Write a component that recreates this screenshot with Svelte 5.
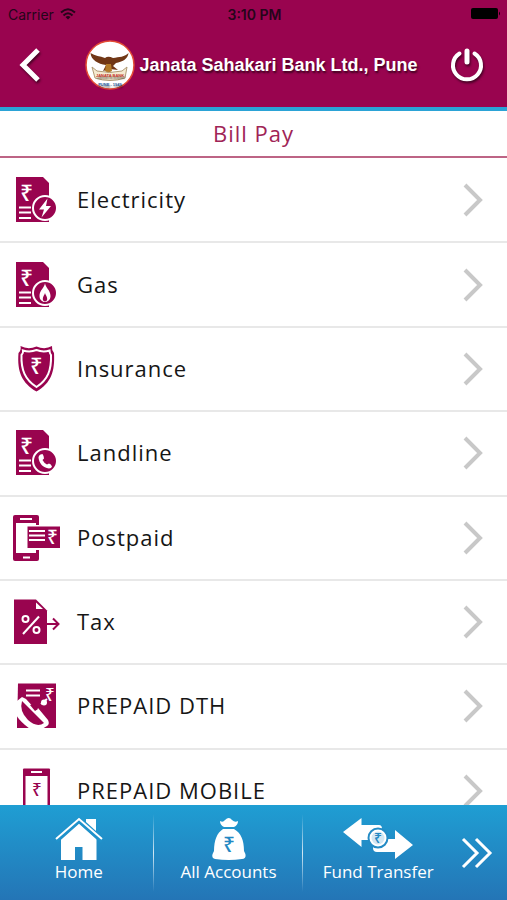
<script>
  const bills = [
    { icon: 'electricity', label: 'Electricity' },
    { icon: 'gas', label: 'Gas' },
    { icon: 'insurance', label: 'Insurance' },
    { icon: 'landline', label: 'Landline' },
    { icon: 'postpaid', label: 'Postpaid' },
    { icon: 'tax', label: 'Tax' },
    { icon: 'dth', label: 'PREPAID DTH' },
    { icon: 'mobile', label: 'PREPAID MOBILE' }
  ];
</script>

{#snippet invoice()}
  <path class="fill" d="M4 1H31L37 7V46H4Z" />
  <text class="rupee light" x="8" y="25" font-size="23">₹</text>
  <path class="line" d="M7 31.5H19M7 36.5H19M7 42H19" />
  <circle class="badge" cx="33" cy="32" r="12" />
{/snippet}

{#snippet billIcon(name)}
  <svg class="bill-icon" viewBox="0 0 48 48" aria-hidden="true">
    {#if name === 'electricity'}
      {@render invoice()}
      <path fill="#fff" d="M35.5 22.5L27 33.5H32L29.5 41.5L39 30H34Z" />
    {:else if name === 'gas'}
      {@render invoice()}
      <path fill="#fff" d="M33 22C33.5 27 38.5 29 38.5 35C38.5 38.5 36 41 33 41C30 41 27.5 38.5 27.5 35C27.5 29 32.5 27 33 22Z" />
      <path class="fill" d="M33 32C33.5 34 35.2 35.5 35.2 38C35.2 39.5 34.2 40.5 33 40.5C31.8 40.5 30.8 39.5 30.8 38C30.8 35.5 32.5 34 33 32Z" />
    {:else if name === 'insurance'}
      <path class="fill" d="M8.5 1Q16 5 24.5 1.5Q33 5 40 1Q39.500 5 42 8C43 27 39 38 24.500 46.500C10 38 5 27 6.500 8Q9.500 5 8.500 1Z" />
      <path fill="none" stroke="#fff" stroke-width="2" d="M11 5.500Q18 7.500 24.500 5Q31 7.500 37.500 5.500Q37.500 8 39 10C39.500 25 36 34.500 24.500 42C13 34.500 9 25 9.500 10Q11.500 8 11 5.500Z" />
      <text class="rupee light" x="18" y="29" font-size="22">₹</text>
    {:else if name === 'landline'}
      {@render invoice()}
      <path fill="#fff" d="M28.500 25.500L30.500 25Q32 27 32 29.500L30.500 31Q32 34 35 35.500L37 34.500Q39 35 40 37.500Q39.500 39.500 37 39.500C31 39 27 34 26.500 28.500Q26.500 26.500 28.500 25.500Z" />
    {:else if name === 'postpaid'}
      <rect class="fill" x="1" y="1" width="26" height="46" rx="2" />
      <path fill="#fff" d="M4 9H24V11H28V36H24V39H4Z" />
      <path class="line" d="M8 5H20M11 43.500H18" />
      <path class="fill" d="M15.500 12.500H48V34H15.500Z" />
      <path class="line" d="M17 17H33M17 21.500H33M17 26H33" />
      <text class="rupee light" x="35" y="30" font-size="19">₹</text>
    {:else if name === 'tax'}
      <path class="fill" d="M2 1.500H24L35 12.500V46H2Z" />
      <path fill="#fff" d="M24 4.500V11H31Z" />
      <g fill="none" stroke="#fff" stroke-width="2">
        <circle cx="13.500" cy="21" r="3" />
        <circle cx="24.500" cy="32" r="3" />
        <path d="M11 36L27 18.500" />
      </g>
      <path fill="none" stroke="#99044f" stroke-width="2" d="M35 26H46M41 20.500L46.500 26L41 31.500" />
    {:else if name === 'dth'}
      <path class="fill" d="M6 1.500H44V46H5Z" />
      <path class="line" d="M14 8.500H28M14 13.500H28" />
      <text class="rupee light" x="33" y="19" font-size="17">₹</text>
      <path fill="#fff" d="M5 19L10 15L14 17L24 28L26 26L36 38Q38 42 35 44L30 47H18L13 43Q5 36 4 32Z" />
      <path class="fill" d="M10 19L32 41Q25 46 16 38Q7 29 10 19Z" />
      <path class="fill" d="M5 35Q9 42 15 46H5ZM22 22L26 27L23 29L18 23Z" />
      <path fill="none" stroke="#fff" stroke-width="2" d="M29 22L35 17" />
      <circle cx="32" cy="20.500" r="3" fill="#fff" />
    {:else if name === 'mobile'}
      <rect class="fill" x="11" y="1.500" width="27" height="46" rx="1" />
      <path fill="#fff" d="M13.500 9H35.500V41H13.500Z" />
      <path class="line" d="M19 5H30" />
      <text class="rupee" fill="#99044f" x="20" y="29" font-size="17">₹</text>
    {/if}
  </svg>
{/snippet}

<div class="app">
  <header>
    <div class="status">
      <span class="carrier">
        Carrier
        <svg width="16" height="12" viewBox="0 0 16 12" aria-hidden="true">
          <g fill="none" stroke="#25051a" stroke-width="2">
            <path d="M1 4.500Q8 -2 15 4.500" />
            <path d="M3.500 7.500Q8 3 12.500 7.500" />
          </g>
          <path fill="#25051a" d="M5.500 9Q8 7 10.500 9L8 11.500Z" />
        </svg>
      </span>
      <span class="time">3:10 PM</span>
      <span class="battery">
        <svg width="30" height="12" viewBox="0 0 30 12" aria-hidden="true">
          <rect x="0" y="0" width="27" height="11" rx="2" />
          <path d="M28 3.500Q30 5.500 28 7.500Z" />
        </svg>
      </span>
    </div>
    <div class="brand-bar">
      <button class="back" aria-label="Back">
        <svg width="24" height="36" viewBox="0 0 24 36" aria-hidden="true">
          <path fill="none" stroke="#fff" stroke-width="5" d="M20 3L5 18L20 33" />
        </svg>
      </button>
      <div class="brand">
        <svg width="50" height="50" viewBox="0 0 50 50" aria-hidden="true">
          <circle cx="25" cy="25" r="24" fill="#fff" stroke="#e34b35" stroke-width="1.500" />
          <path fill="#713716" d="M5.500 13C10 16 15 16 20 18Q23 15.500 28 18C34 17 40 17 43.500 13C43 19 37 22 31 23L28 26L33 30L25 29L18 31L21 25C13 24 6 20 5.500 13Z" />
          <path fill="#b47b29" d="M21 24H26L27 31L23 33L20 31Z" />
          <path fill="#f5ead0" stroke="#b09a75" stroke-width="1" d="M7 27L12 31Q25 34 37 31L42 27L40 38Q25 43 10 38Z" />
          <text x="25" y="37" text-anchor="middle" font-size="4" font-weight="700" fill="#c8372f">JANATA BANK</text>
          <text x="25" y="46" text-anchor="middle" font-size="4" font-weight="700" fill="#24569c">PUNE - 1949</text>
        </svg>
        <span>Janata Sahakari Bank Ltd., Pune</span>
      </div>
      <button class="power" aria-label="Log out">
        <svg width="36" height="36" viewBox="0 0 36 36" aria-hidden="true">
          <path fill="none" stroke="#fff" stroke-width="4" stroke-linecap="round" d="M10.500 6.500A14 14 0 1 0 25.500 6.500" />
          <path fill="none" stroke="#fff" stroke-width="5" stroke-linecap="round" d="M18 4V15" />
        </svg>
      </button>
    </div>
  </header>

  <h1>Bill Pay</h1>

  <main>
    <ul>
      {#each bills as bill}
        <li>
          <a href="#{bill.icon}">
            {@render billIcon(bill.icon)}
            <span>{bill.label}</span>
            <svg class="chevron" viewBox="0 0 20 34" aria-hidden="true">
              <path fill="none" stroke="#c8c8c8" stroke-width="4" d="M2 2L17 17L2 32" />
            </svg>
          </a>
        </li>
      {/each}
    </ul>
  </main>

  <nav>
    <a class="tab" href="#home">
      <svg width="48" height="44" viewBox="0 0 48 44" aria-hidden="true">
        <path fill="#fff" d="M31 2H41V14L31 5Z" />
        <path fill="#fff" d="M6 22L24 6L41.500 22V43H27.500V30H20V43H6Z" />
        <path fill="none" stroke="#2092cb" stroke-width="5" d="M1 24L24 3.500L47 24" />
        <path fill="none" stroke="#fff" stroke-width="2" d="M1 22L24 2L47 22" />
      </svg>
      <span>Home</span>
    </a>
    <a class="tab" href="#accounts">
      <svg width="36" height="44" viewBox="0 0 36 44" aria-hidden="true">
        <path fill="#fff" d="M9 4Q12 6 14 3Q18 -1 21 3Q24 6 27 4Q27 8 23 10H13Q9 8 9 4Z" />
        <path fill="#fff" d="M12 12H23C30 16 33 23 33 34Q37 41 31 42Q18 44 4 42Q-1 41 3 34C3 23 6 16 12 12Z" />
        <text class="rupee" fill="#2388c3" x="12" y="35" font-size="21">₹</text>
      </svg>
      <span>All Accounts</span>
    </a>
    <a class="tab" href="#transfer">
      <svg width="70" height="44" viewBox="0 0 70 44" aria-hidden="true">
        <path fill="#fff" d="M0 15L18.500 1V8H36Q39 8 39 12V23H18.500V30Z" />
        <path fill="#fff" d="M70 28L52 13V22H30V31Q30 35 34 35H52V42Z" />
        <circle cx="35" cy="21" r="9.500" fill="#fff" stroke="#248bc5" stroke-width="2" />
        <circle cx="35" cy="21" r="6.500" fill="#2388c3" opacity="0.2" />
        <text class="rupee" fill="#2388c3" x="31" y="26" font-size="14">₹</text>
      </svg>
      <span>Fund Transfer</span>
    </a>
    <button class="more" aria-label="More">
      <svg width="32" height="32" viewBox="0 0 32 32" aria-hidden="true">
        <path fill="none" stroke="#fff" stroke-width="3" d="M2 2L16 16L2 30M15 2L29 16L15 30" />
      </svg>
    </button>
  </nav>
</div>

<style>
  :global(body) {
    margin: 0;
  }

  .app {
    display: flex;
    flex-direction: column;
    height: 100vh;
    background: #fff;
    color: #161616;
    font-family: 'Open Sans', 'Noto Sans', sans-serif;
  }

  a {
    color: inherit;
    text-decoration: none;
  }

  button {
    display: flex;
    align-items: center;
    padding: 0;
    border: 0;
    background: none;
  }

  header {
    flex: none;
    background: #99044f;
    border-bottom: 4px solid #2ba3d6;
    font-family: 'Liberation Sans', Arial, sans-serif;
  }

  .status {
    display: grid;
    grid-template-columns: 1fr auto 1fr;
    align-items: center;
    height: 28px;
    padding: 0 6px 0 8px;
    color: #25051a;
    font-family: Inter, 'Liberation Sans', sans-serif;
    font-size: 14px;
  }

  .carrier {
    display: flex;
    align-items: center;
    gap: 6px;
  }

  .time {
    font-weight: 600;
  }

  .battery {
    display: flex;
    justify-content: flex-end;
  }

  .brand-bar {
    display: flex;
    align-items: center;
    height: 74px;
    padding: 0 22px 5px 18px;
  }

  .back,
  .power {
    flex: none;
    filter: drop-shadow(1px 2px 1px #0008);
  }

  .back {
    width: 36px;
  }

  .brand {
    display: flex;
    flex: 1;
    align-items: center;
    justify-content: center;
    gap: 4px;
    color: #fff;
    font-size: 18px;
    font-weight: 700;
    text-shadow: 1px 2px 2px #0009;
    white-space: nowrap;
  }

  h1 {
    flex: none;
    margin: 0;
    border-bottom: 2px solid #bd6485;
    color: #a02456;
    font-size: 22px;
    font-weight: 400;
    line-height: 45px;
    text-align: center;
    letter-spacing: 1px;
  }

  main {
    flex: 1;
    min-height: 0;
    overflow-y: auto;
    scrollbar-width: none;
  }

  ul {
    display: grid;
    grid-auto-rows: 1fr;
    min-height: 675px;
    margin: 0;
    padding: 1px 0 0;
    list-style: none;
  }

  li {
    display: flex;
    border-bottom: 2px solid #e8e8e8;
  }

  li a {
    display: flex;
    flex: 1;
    align-items: center;
    padding: 0 24px 0 12px;
    font-size: 22px;
    letter-spacing: 1px;
  }

  li span {
    flex: 1;
    padding-bottom: 2px;
  }

  .bill-icon {
    width: 48px;
    height: 48px;
    margin-right: 17px;
  }

  .chevron {
    width: 20px;
    height: 34px;
  }

  .fill {
    fill: #99044f;
  }

  .line {
    fill: none;
    stroke: #fff;
    stroke-width: 2;
  }

  .badge {
    fill: #99044f;
    stroke: #fff;
    stroke-width: 2;
  }

  .rupee {
    font-family: 'Open Sans', 'Noto Sans', sans-serif;
    font-weight: 500;
    letter-spacing: 0;
  }

  .light {
    fill: #fff;
  }

  nav {
    display: flex;
    flex: none;
    height: 95px;
    padding-left: 4px;
    background: linear-gradient(#1f9ed3, #2475b6);
    color: #fff;
    font-size: 17px;
  }

  .tab {
    display: flex;
    flex: 1;
    flex-direction: column;
    align-items: center;
    padding-top: 12px;
    line-height: 22px;
    background: linear-gradient(#fff0, #fffc, #fff0) right center / 1px 78px no-repeat;
  }

  .tab:nth-child(3) {
    background: none;
  }

  .more {
    flex: none;
    width: 54px;
    padding-left: 8px;
    color: #fff;
  }
</style>
